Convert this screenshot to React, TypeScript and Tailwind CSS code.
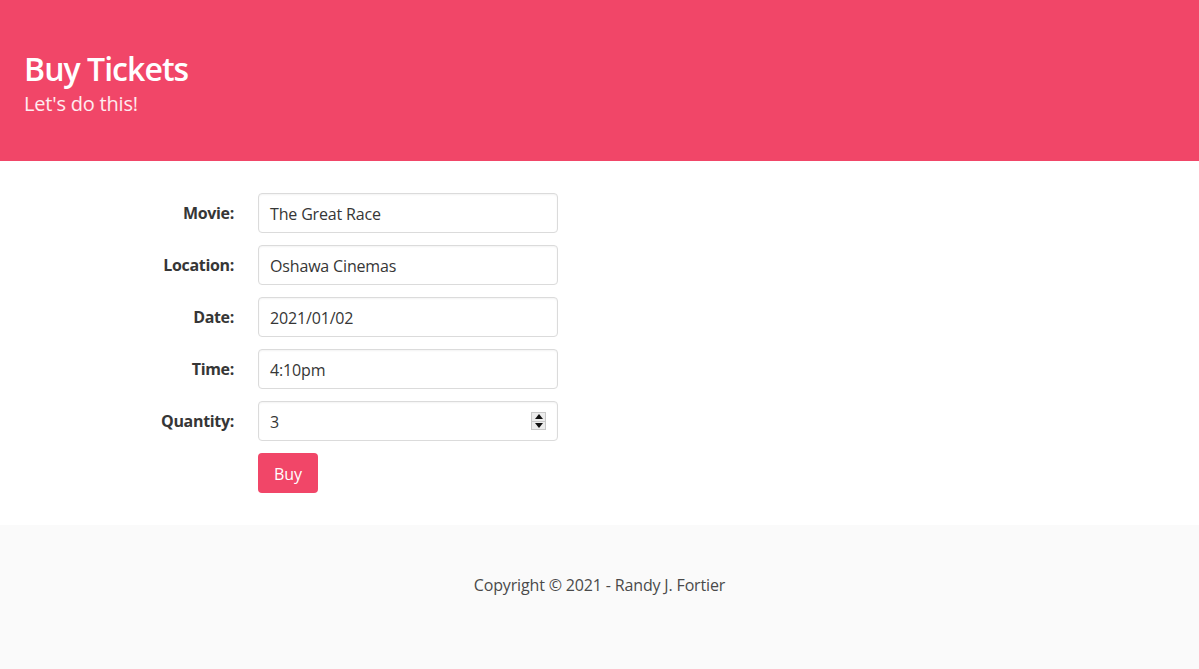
import React from 'react';

type Field = {
  label: string;
  value: string;
  spinner?: boolean;
};

const fields: Field[] = [
  { label: 'Movie:', value: 'The Great Race' },
  { label: 'Location:', value: 'Oshawa Cinemas' },
  { label: 'Date:', value: '2021/01/02' },
  { label: 'Time:', value: '4:10pm' },
  { label: 'Quantity:', value: '3', spinner: true },
];

const font = { fontFamily: '"Open Sans", "Noto Sans", sans-serif' };

const Spinner: React.FC = () => (
  <div className="absolute right-[12px] top-[11px] flex h-[18px] w-[15px] flex-col border border-[#c8c8c8] bg-[#ececec]">
    <div className="flex flex-1 items-center justify-center border-b border-[#c8c8c8]">
      <svg width="8" height="5" viewBox="0 0 8 5">
        <path d="M0 5 L4 0 L8 5 Z" fill="#111" />
      </svg>
    </div>
    <div className="flex flex-1 items-center justify-center">
      <svg width="8" height="5" viewBox="0 0 8 5">
        <path d="M0 0 L8 0 L4 5 Z" fill="#111" />
      </svg>
    </div>
  </div>
);

const App: React.FC = () => {
  return (
    <div className="min-h-[669px] bg-white text-[#4a4a4a]" style={font}>
      <section className="bg-[#f14668] px-6 pt-[51px] pb-[45px]">
        <h1 className="text-[32px] font-semibold leading-[1.125] tracking-[-0.03em] text-white">Buy Tickets</h1>
        <h2 className="mt-[4px] text-[20px] leading-[1.25] tracking-[-0.01em] text-white/90">Let's do this!</h2>
      </section>

      <main className="py-8">
        <div className="flex flex-col gap-3">
          {fields.map((f) => (
            <div key={f.label} className="flex items-center">
              <label className="w-[234px] text-right text-[16px] font-bold tracking-[-0.02em] text-[#363636]">
                {f.label}
              </label>
              <div className="relative ml-6 w-[300px]">
                <div className="flex h-10 items-center rounded-[4px] border border-[#dbdbdb] bg-white px-[11px] pt-[2px] text-[16px] tracking-[-0.01em] text-[#363636] shadow-[inset_0_1px_2px_rgba(10,10,10,0.05)]">
                  {f.value}
                </div>
                {f.spinner && <Spinner />}
              </div>
            </div>
          ))}
          <div className="flex">
            <div className="w-[234px]" />
            <button className="ml-6 h-10 w-[60px] rounded-[4px] bg-[#f14668] pt-[2px] text-[16px] text-white">
              Buy
            </button>
          </div>
        </div>
      </main>

      <footer className="bg-[#fafafa] px-6 pt-12 pb-24 text-center">
        <p className="text-[16px] leading-6 tracking-[-0.01em] text-[#4a4a4a]">Copyright © 2021 - Randy J. Fortier</p>
      </footer>
    </div>
  );
};

export default App;
